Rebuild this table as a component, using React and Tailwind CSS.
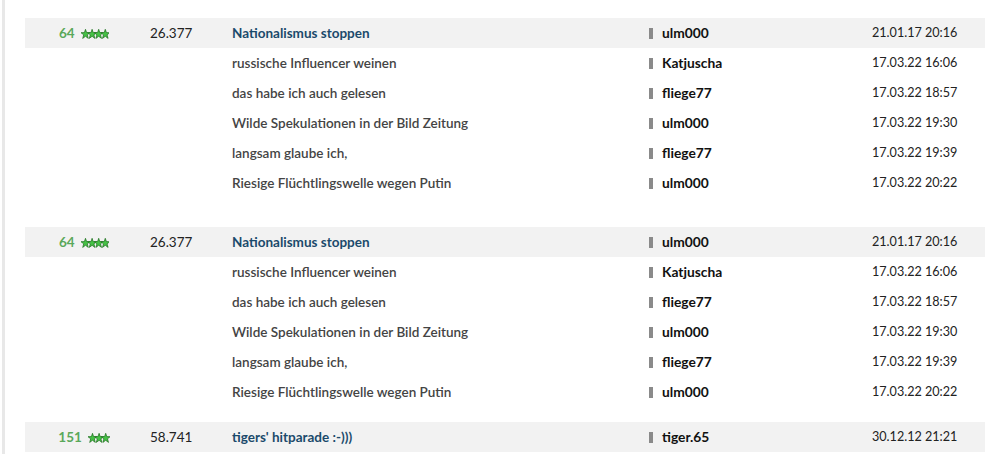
import React from "react";

const Stars = ({ n }) => (
  <svg width={n * 6.6 + 2} height="10" viewBox={`0 0 ${n * 6.6 + 2} 10`} className="block">
    {Array.from({ length: n }).map((_, i) => (
      <polygon
        key={i}
        transform={`translate(${i * 6.6},0)`}
        points="4.5,0.3 5.6,3.6 9,3.7 6.3,5.8 7.3,9.4 4.5,7.3 1.7,9.4 2.7,5.8 0,3.7 3.4,3.6"
        fill="#46c246"
        stroke="#1d6b1d"
        strokeWidth="0.7"
      />
    ))}
  </svg>
);

const Row = ({ main, num, stars, views, title, user, date }) => (
  <div className={`flex h-[30px] items-center pt-[1px] ${main ? "bg-[#f2f2f2]" : ""}`}>
    <div className="w-[118px] flex items-center justify-center gap-[6px]">
      {main && (
        <>
          <span className="text-[#5aa85a] font-bold text-[13.5px]">{num}</span>
          <Stars n={stars} />
        </>
      )}
    </div>
    <div className="w-[89px] pl-[7px] text-[#222] text-[13.5px]">{main ? views : ""}</div>
    <div className={`w-[417px] text-[13.5px] ${main ? "text-[#1b4a6b] font-bold" : "text-[#444] font-semibold"}`}>{title}</div>
    <div className="w-[223px] flex items-center gap-[9px]">
      <span className="w-[4px] h-[11px] bg-[#8a8a8a] inline-block" />
      <span className="font-bold text-[#111] text-[13.8px]">{user}</span>
    </div>
    <div className="text-[#222] text-[12.6px]">{date}</div>
  </div>
);

const group = [
  ["russische Influencer weinen", "Katjuscha", "17.03.22 16:06"],
  ["das habe ich auch gelesen", "fliege77", "17.03.22 18:57"],
  ["Wilde Spekulationen in der Bild Zeitung", "ulm000", "17.03.22 19:30"],
  ["langsam glaube ich,", "fliege77", "17.03.22 19:39"],
  ["Riesige Flüchtlingswelle wegen Putin", "ulm000", "17.03.22 20:22"],
];

const Group = () => (
  <div>
    <Row main num="64" stars={4} views="26.377" title="Nationalismus stoppen" user="ulm000" date="21.01.17 20:16" />
    {group.map(([t, u, d], i) => (
      <Row key={i} title={t} user={u} date={d} />
    ))}
  </div>
);

export default function App() {
  return (
    <div className="w-[999px] h-[454px] bg-white overflow-hidden flex" style={{ fontFamily: "Lato, 'Open Sans', sans-serif" }}>
      <div className="w-[2px]" />
      <div className="w-[3px] bg-[#e8e8e8]" />
      <div className="pl-[20px] pt-[18px] w-[980px] text-[13px]">
        <div className="w-[960px] flex flex-col">
          <Group />
          <div className="h-[29px]" />
          <Group />
          <div className="h-[15px]" />
          <Row main num="151" stars={3} views="58.741" title="tigers' hitparade :-)))" user="tiger.65" date="30.12.12 21:21" />
        </div>
      </div>
    </div>
  );
}
